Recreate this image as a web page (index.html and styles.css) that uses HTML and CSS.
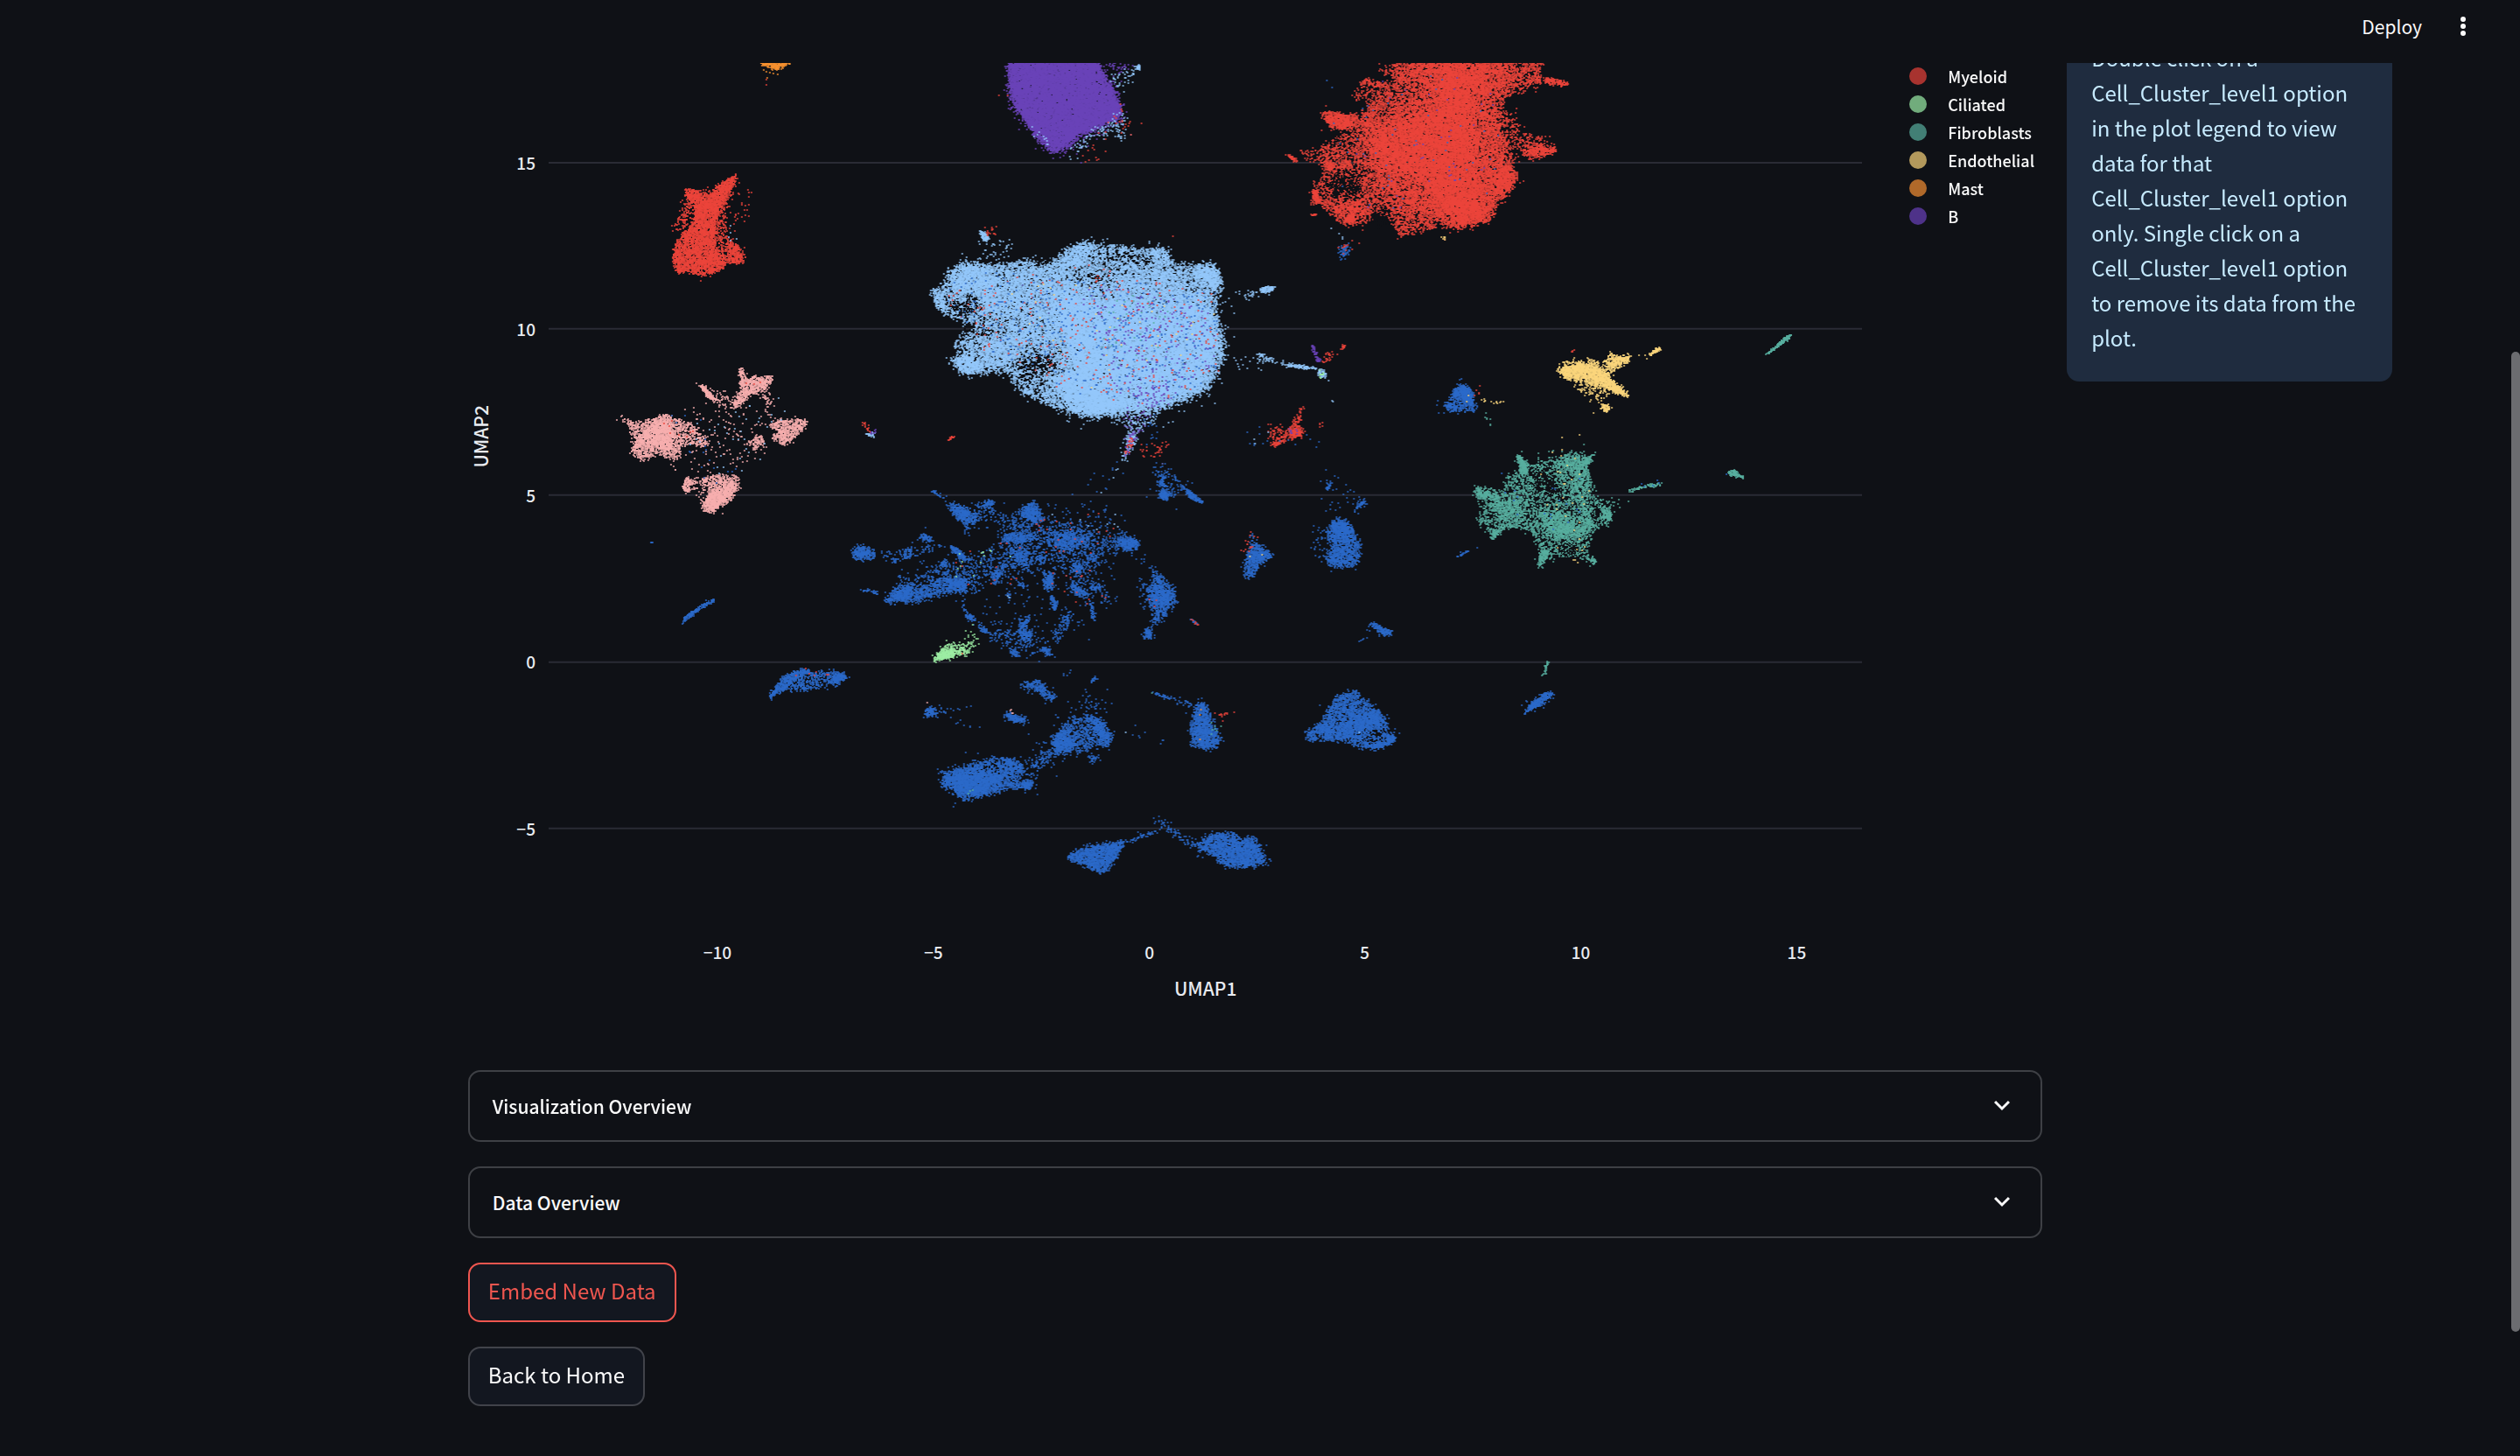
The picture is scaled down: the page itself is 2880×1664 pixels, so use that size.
FILE: index.html
```html
<!DOCTYPE html>
<html lang="en">
<head>
<meta charset="utf-8">
<title>UMAP Visualization</title>
<meta name="viewport" content="width=device-width, initial-scale=1">
<link rel="stylesheet" href="styles.css">
</head>
<body>
<header class="topbar">
  <button class="deploy" type="button">Deploy</button>
  <button class="menu" type="button" aria-label="Main menu">
    <svg viewBox="0 0 28 28" aria-hidden="true"><circle cx="14" cy="6" r="3"/><circle cx="14" cy="14" r="3"/><circle cx="14" cy="22" r="3"/></svg>
  </button>
</header>

<main class="columns">
  <section class="center">
    <figure class="plot">
      <div class="chart">
        <svg class="axes" viewBox="535 20 1594 1175" role="img" aria-label="UMAP scatter plot">
          <g class="grid">
            <path d="M627 186H2129M627 376H2129M627 566H2129M627 757H2129M627 947H2129"/>
          </g>
          <g class="ticks ticks-y">
            <text x="612" y="194">15</text>
            <text x="612" y="384">10</text>
            <text x="612" y="574">5</text>
            <text x="612" y="764">0</text>
            <text x="612" y="955">−5</text>
          </g>
          <g class="ticks ticks-x">
            <text x="820" y="1096">−10</text>
            <text x="1067" y="1096">−5</text>
            <text x="1314" y="1096">0</text>
            <text x="1560" y="1096">5</text>
            <text x="1807" y="1096">10</text>
            <text x="2054" y="1096">15</text>
          </g>
          <text class="axis-title" x="1378" y="1138">UMAP1</text>
          <text class="axis-title" transform="translate(558 499) rotate(-90)">UMAP2</text>
        </svg>
        <canvas class="points" id="points" width="1594" height="1175"></canvas>
      </div>
      <ul class="legend">
        <li><span class="dot myeloid"></span>Myeloid</li>
        <li><span class="dot ciliated"></span>Ciliated</li>
        <li><span class="dot fibroblasts"></span>Fibroblasts</li>
        <li><span class="dot endothelial"></span>Endothelial</li>
        <li><span class="dot mast"></span>Mast</li>
        <li><span class="dot b-cell"></span>B</li>
      </ul>
    </figure>

    <details class="expander">
      <summary>Visualization Overview
        <svg viewBox="0 0 24 24" aria-hidden="true"><path d="M6.700 8.700L12 14l5.300-5.300"/></svg>
      </summary>
    </details>
    <details class="expander">
      <summary>Data Overview
        <svg viewBox="0 0 24 24" aria-hidden="true"><path d="M6.700 8.700L12 14l5.300-5.300"/></svg>
      </summary>
    </details>
    <button class="btn btn-active" type="button">Embed New Data</button>
    <button class="btn" type="button">Back to Home</button>
  </section>

  <aside class="callout">
    <p>Double click on a Cell_Cluster_level1 option in the plot legend to view data for that Cell_Cluster_level1 option only. Single click on a Cell_Cluster_level1 option to remove its data from the plot.</p>
  </aside>
</main>
<div class="scroll-thumb"></div>
<script src="plot.js"></script>
</body>
</html>
```

FILE: styles.css
```css
* { box-sizing: border-box; }

body {
  margin: 0;
  min-height: 100vh;
  background: #0f1116;
  color: #fafafa;
  font-family: "Noto Sans CJK SC", "Noto Sans", sans-serif;
  font-size: 24px;
  overflow: hidden;
}

button { font: inherit; color: inherit; cursor: pointer; }

.topbar {
  position: fixed;
  inset: 0 0 auto;
  z-index: 2;
  height: 72px;
  padding: 0 51px 12px;
  display: flex;
  align-items: center;
  justify-content: flex-end;
  gap: 33px;
  background: #0f1116;
}
.deploy, .menu { padding: 0; border: 0; background: none; }
.deploy { font-size: 21px; line-height: 32px; }
.menu { width: 28px; height: 28px; }
.menu svg { display: block; width: 28px; height: 28px; fill: #fafafa; }

.columns {
  display: grid;
  grid-template-columns: 361fr 1800fr 372fr;
  column-gap: 28px;
  align-items: start;
  padding: 20px 146px 56px;
}
.center {
  grid-column: 2;
  display: flex;
  flex-direction: column;
  align-items: flex-start;
  gap: 28px;
}

.plot {
  width: 100%;
  margin: 0;
  display: grid;
  grid-template-columns: 1594fr 206fr;
}
.chart { display: grid; }
.axes, .points { grid-area: 1 / 1; display: block; width: 100%; }
.grid path { stroke: #2a2b35; stroke-width: 2; }
.axes text { fill: #e8ebf0; font-weight: 500; }
.ticks { font-size: 19px; }
.ticks-y { text-anchor: end; }
.ticks-x { text-anchor: middle; }
.axis-title { font-size: 21px; text-anchor: middle; }

.legend {
  list-style: none;
  margin: 0;
  padding: 51px 0 0 54px;
  font-size: 18px;
  font-weight: 500;
}
.legend li { display: flex; align-items: center; gap: 24px; height: 32px; white-space: nowrap; }
.dot { flex: none; width: 20px; height: 20px; border-radius: 50%; }
.myeloid { background: #a8332f; }
.ciliated { background: #71ac7c; }
.fibroblasts { background: #427f75; }
.endothelial { background: #b3995c; }
.mast { background: #b0692a; }
.b-cell { background: #4e3289; }

.expander {
  width: 100%;
  border: 2px solid #3e4045;
  border-radius: 14px;
}
.expander summary {
  display: flex;
  align-items: center;
  justify-content: space-between;
  height: 78px;
  padding: 0 26px;
  font-size: 21px;
  font-weight: 500;
  list-style: none;
  cursor: pointer;
}
.expander svg { width: 36px; height: 36px; fill: none; stroke: #fafafa; stroke-width: 2; }

.btn {
  height: 68px;
  padding: 0 21px 4px;
  border: 2px solid #41434a;
  border-radius: 14px;
  background: #131720;
  line-height: 40px;
}
.btn-active { border-color: #ef564f; color: #ef564f; }

.callout {
  padding: 26px 28px 30px;
  border-radius: 14px;
  background: #1f2c3f;
  color: #c7ebff;
  line-height: 40px;
}
.callout p { margin: 0; }

.scroll-thumb {
  position: fixed;
  top: 402px;
  right: 0;
  bottom: 142px;
  z-index: 3;
  width: 10px;
  border-radius: 5px;
  background: #6b6c70;
}
```

FILE: plot.js
```js
// Draws the cell clusters. Each panel is [originX, originY, unitsPerPxX, unitsPerPxY];
const COLORS = {
  red: '#ec443a', sky: '#93c8fb', blue: '#2b69c9', pink: '#f6aeae', teal: '#58af9f',
  gold: '#fbd67c', orange: '#f6912f', violet: '#6a42b9', green: '#9deea4', gap: '#0f1116'
};
const DENSITY = 1.6;
const SPREAD = 0.75;

const PANELS = [
  { at: [520, 50, 3, 2.8], clusters: [
    ['orange', .7, 1, '1040,30 1160,30 1150,60 1135,70 1115,79 1098,81 1075,75 1052,66'],
    ['orange', .04, 2, '1060,80 1120,80 1070,108'],
    ['red', .01, 1, '1065,110 1080,115 1076,210 1068,210'],
    ['red', .55, 1.5, '785,467 830,468 850,490 870,490 905,455 935,435 966,421 958,445 930,490 905,530 893,570 890,620 900,660 930,690 930,712 880,735 830,740 800,728 763,733 750,705 748,670 765,635 790,600 815,575 830,545 820,515 795,490'],
    ['red', .5, 2, '935,630 965,640 990,675 988,698 945,705 935,680'],
    ['red', .15, 3, '790,470 870,468 960,430 940,520 930,600 950,640 930,700 890,690 880,560 820,560 770,600 745,580 780,540'],
    ['red', .02, 3, '960,470 1020,465 1010,560 950,600'],
    ['sky', .01, 3, '900,560 990,600 975,660 930,620'],
    ['pink', .3, 2, '565,1193 600,1210 640,1210 680,1200 720,1187 760,1200 800,1215 835,1235 870,1280 850,1290 800,1280 775,1290 770,1320 740,1330 700,1310 640,1335 608,1310 615,1270 600,1230'],
    ['pink', .45, 2, '612,1305 630,1260 690,1210 730,1195 750,1240 740,1300 690,1290 640,1280'],
    ['pink', .8, 1, '838,1092 850,1093 880,1120 900,1142 885,1143 862,1125'],
    ['pink', .08, 3, '880,1110 950,1110 950,1170 900,1160'],
    ['pink', .5, 1.5, '973,1042 988,1045 1000,1075 1030,1065 1095,1068 1075,1090 1060,1110 1030,1115 1000,1130 965,1170 950,1155 980,1110'],
    ['pink', .12, 4, '1030,1100 1075,1100 1080,1130 1100,1190 1060,1150'],
    ['pink', .4, 2, '1075,1220 1120,1205 1195,1203 1215,1220 1180,1240 1160,1265 1125,1283 1085,1265 1110,1240'],
    ['pink', .35, 2, '1005,1275 1050,1255 1065,1270 1025,1300'],
    ['pink', .012, 5, '820,1160 1080,1170 1080,1290 960,1380 800,1400 740,1350'],
    ['pink', .5, 1, '775,1425 795,1390 822,1400 800,1440'],
    ['pink', .28, 2, '845,1395 900,1380 970,1385 975,1410 950,1460 910,1480 890,1500 860,1500 848,1465 880,1430'],
    ['pink', .5, 2, '890,1425 960,1400 945,1450 900,1480 880,1500 850,1475'],
    ['pink', .08, 3, '800,1390 880,1380 880,1450 810,1440'],
    ['red', .012, 3, '720,1210 800,1210 820,1250 740,1260'],
    ['red', .012, 3, '980,1080 1050,1080 1040,1120 1000,1120'],
    ['sky', .004, 5, '780,1200 870,1200 1100,1100 1150,1170 980,1370 880,1370'],
    ['blue', .003, 5, '740,1190 870,1200 1000,1370 840,1440'],
    ['red', .5, 1, '1400,1212 1408,1215 1422,1243 1415,1243'],
    ['sky', .5, 1, '1408,1245 1430,1243 1440,1250 1433,1260'],
    ['violet', .3, 1, '1425,1245 1452,1235 1440,1248']
  ]},
  { at: [1020, 50, 3, 2.8], clusters: [
    ['violet', .85, 2.5, '402,70 410,20 690,20 718,90 755,150 785,215 780,235 700,265 640,290 590,335 550,345 510,310 460,250 425,200 405,150'],
    ['violet', .1, 5, '400,60 420,20 700,20 790,200 790,240 600,350 540,350 410,200'],
    ['violet', .12, 2, '735,62 830,64 780,95'],
    ['sky', .6, 1, '830,70 852,68 852,84 835,84'],
    ['sky', .05, 3, '740,110 830,80 825,130 790,150'],
    ['sky', .08, 4, '740,250 800,220 800,300 700,300 600,370 640,310'],
    ['sky', .02, 3, '460,280 520,290 560,350 520,320'],
    ['red', .012, 6, '700,300 800,200 870,260 800,320 620,400'],
    ['red', .002, 5, '360,130 420,200 410,300 380,310'],
    ['sky', .3, 3.5, '135,800 170,780 200,720 240,700 330,705 400,710 440,690 500,700 560,690 600,655 660,635 720,650 800,650 860,660 910,650 950,675 970,705 1030,715 1070,703 1105,710 1135,750 1120,800 1105,850 1115,890 1135,940 1135,1000 1110,1070 1070,1110 1000,1140 900,1175 800,1175 700,1195 640,1190 560,1165 500,1140 440,1115 400,1050 340,1045 250,1060 205,1020 240,990 210,960 260,930 300,900 240,885 170,860'],
    ['gap', .25, 4, '190,820 280,820 280,860 240,870 200,850'],
    ['gap', .2, 5, '440,1010 560,1000 570,1030 500,1060 510,1100 450,1080'],
    ['gap', .08, 4, '690,665 880,665 900,710 880,720 690,690'],
    ['gap', .12, 4, '620,740 780,750 780,780 680,780'],
    ['gap', .08, 4, '350,850 480,880 480,920 340,930 250,930'],
    ['gap', .2, 4, '490,695 550,695 540,710 490,710'],
    ['sky', .2, 6, '560,780 700,760 900,720 1080,810 1120,960 1080,1100 900,1165 700,1190 560,1090 600,960'],
    ['sky', .35, 8, '560,800 700,820 900,830 1080,830 1120,960 1070,1090 900,1150 740,1180 660,1080 600,960'],
    ['sky', .35, 5, '210,730 300,710 350,750 350,870 320,850 290,790 210,780'],
    ['sky', .45, 3, '210,1010 260,990 290,1020 330,1040 250,1055'],
    ['sky', .2, 5, '300,950 450,940 400,1020 330,1040'],
    ['sky', .4, 4, '1040,715 1100,712 1128,750 1105,785 1060,760'],
    ['sky', .4, 4, '600,680 650,640 700,650 660,690 570,730'],
    ['sky', .35, 4, '880,660 925,660 955,700 925,700'],
    ['sky', .2, 8, '350,730 600,720 640,950 440,970 330,900'],
    ['sky', .4, 4, '540,1080 620,1050 760,1150 700,1188 620,1170'],
    ['sky', .3, 3, '138,800 165,800 185,850 170,850'],
    ['violet', .009, 3, '620,740 900,800 1090,860 1110,1000 1000,1120 900,1170 760,1100'],
    ['violet', .03, 4, '820,1100 980,1090 930,1150 850,1170'],
    ['red', .005, 3, '160,800 700,700 1110,800 1120,1050 900,1160 640,1120 340,1000'],
    ['blue', .008, 3, '160,800 300,720 1110,800 1120,1050 900,1160 640,1120 340,1000'],
    ['gold', .001, 3, '340,740 1110,800 1120,1050 640,1120'],
    ['teal', .003, 3, '700,800 950,800 950,1050 700,1000'],
    ['sky', .8, 1, '300,602 320,602 332,625 312,632'],
    ['red', .1, 1.5, '320,590 350,590 355,620 330,620'],
    ['sky', .03, 3, '290,640 410,620 400,690 300,690'],
    ['red', .001, 4, '940,570 1030,570 1040,630 940,640'],
    ['sky', .8, 1, '1262,785 1285,778 1312,780 1300,793 1272,797'],
    ['sky', .08, 2, '1170,800 1260,788 1265,800 1210,815'],
    ['sky', .13, 2, '1250,985 1300,1000 1320,1025 1270,1020'],
    ['sky', .012, 4, '1150,980 1240,980 1320,1040 1180,1060'],
    ['sky', .5, 1, '1320,1024 1380,1026 1440,1035 1460,1043 1380,1036'],
    ['sky', .5, 2, '1460,1042 1480,1045 1488,1060 1472,1070'],
    ['green', .1, 2, '1460,1050 1485,1050 1465,1085'],
    ['violet', .45, 1, '1438,965 1446,965 1470,1020 1457,1018'],
    ['sky', .03, 2, '1490,1060 1500,1060 1512,1160 1505,1160'],
    ['sky', .1, 4, '750,1195 920,1180 900,1210 850,1240 800,1330 785,1345 800,1270 810,1220'],
    ['violet', .025, 4, '800,1170 900,1170 850,1250 800,1320'],
    ['sky', .35, 1.5, '820,1235 838,1260 805,1310 788,1345 800,1290'],
    ['violet', .12, 2, '820,1240 835,1255 810,1320 795,1320'],
    ['red', .12, 2, '820,1260 835,1275 800,1320 795,1310'],
    ['red', .035, 4, '840,1270 960,1270 920,1330 840,1310'],
    ['blue', .02, 5, '870,1190 910,1200 910,1260 870,1290'],
    ['sky', .02, 4, '800,1330 720,1430 700,1440 760,1360'],
    ['blue', .008, 6, '640,1400 800,1330 780,1400 720,1440'],
    ['red', .9, .5, '188,1268 216,1253 218,1256 192,1270'],
    ['red', .2, 2, '1300,1285 1330,1260 1360,1235 1395,1180 1412,1155 1400,1200 1410,1255 1350,1270 1315,1290'],
    ['red', .5, 1.5, '1355,1235 1390,1228 1410,1255 1370,1258'],
    ['red', .8, 1, '1305,1280 1345,1268 1318,1288'],
    ['red', .1, 3, '1290,1225 1360,1230 1360,1265 1300,1280'],
    ['red', .06, 2, '1440,1210 1475,1210 1475,1225 1445,1225'],
    ['violet', .03, 2, '1340,1225 1400,1230 1390,1260'],
    ['blue', .005, 3, '1190,1230 1480,1230 1480,1300 1200,1290'],
    ['sky', .005, 3, '1210,1220 1300,1240 1280,1300 1220,1290'],
    ['blue', .3, 2, '920,1380 935,1380 942,1430 955,1440 935,1450 920,1450'],
    ['blue', .7, 1.5, '920,1438 950,1435 945,1460 918,1458'],
    ['blue', .8, 1, '990,1413 1010,1425 1070,1466 1066,1471 1020,1450'],
    ['blue', .06, 4, '900,1330 930,1350 1000,1400 1010,1440 900,1440']
  ]},
  { at: [1420, 50, 2.45, 2.24], clusters: [
    ['red', .22, 2.5, '430,20 850,20 835,75 830,105 780,120 735,140 725,180 735,230 750,270 770,330 765,360 745,385 715,410 710,440 690,455 640,455 610,475 560,462 510,478 440,492 420,450 380,430 345,465 280,460 250,435 225,420 195,400 200,370 240,320 230,300 220,270 260,240 300,230 340,215 340,180 370,140 440,110 420,70'],
    ['gap', .35, 5, '250,340 320,330 330,385 260,395 225,370'],
    ['gap', .2, 4, '370,415 420,425 410,460 370,460'],
    ['gap', .15, 4, '250,240 300,235 300,270 250,260'],
    ['red', .2, 6, '470,20 740,20 740,100 690,160 720,200 720,260 735,300 750,345 715,380 690,440 610,465 560,450 440,420 400,360 360,320 350,240 400,190 500,130 480,70'],
    ['red', .3, 8, '540,60 680,60 640,180 660,300 660,420 580,430 500,350 380,300 370,230 460,200 560,170'],
    ['red', .4, 3, '740,310 768,340 750,375 720,390 710,350'],
    ['red', .4, 4, '560,400 640,400 705,430 690,450 610,470'],
    ['red', .6, 2, '225,173 270,178 320,190 320,205 270,220 245,212'],
    ['red', .2, 3, '300,180 370,180 370,220 280,222'],
    ['red', .35, 2, '325,100 350,93 400,100 450,112 400,112 350,106'],
    ['red', .1, 3, '305,140 330,100 440,120 360,155'],
    ['red', .08, 4, '380,60 480,50 490,110 400,90'],
    ['red', .9, 1, '122,285 135,286 158,299 150,301'],
    ['red', .1, 4, '160,278 240,265 260,320 200,303'],
    ['red', .6, 2, '225,306 260,309 250,322'],
    ['red', .6, 1.5, '845,90 870,88 915,102 905,109 860,104'],
    ['red', .2, 2, '820,75 860,95 820,105'],
    ['red', .5, 2, '785,268 830,262 878,266 880,278 830,293 795,288'],
    ['red', .12, 4, '725,170 770,190 780,230 850,235 860,262 770,280 730,270'],
    ['red', .9, .5, '190,441 212,432 207,439'],
    ['red', .6, 2, '275,450 320,445 300,462'],
    ['red', .3, 3, '250,430 330,400 350,430 300,450'],
    ['red', .5, 2, '194,380 208,375 222,405 200,412'],
    ['blue', .001, 3, '200,80 700,80 740,380 300,440'],
    ['violet', .001, 3, '370,80 700,80 740,380 300,440'],
    ['blue', .4, 2, '274,530 285,512 302,522 282,552'],
    ['red', .06, 3, '270,525 295,505 325,510 300,535'],
    ['sky', .008, 4, '215,465 300,480 290,510 230,490'],
    ['gold', .3, 1, '556,490 564,491 567,502'],
    ['red', .2, 2, '225,815 240,790 258,787 255,800 235,818'],
    ['red', .5, 1, '275,781 288,768 290,775 278,784'],
    ['blue', .35, 2, '565,940 585,905 605,875 625,872 640,885 660,925 650,938 620,940'],
    ['blue', .6, 2, '595,895 620,875 638,885 650,920 600,905'],
    ['blue', .04, 3, '535,935 580,900 590,930 550,945'],
    ['gold', .12, 1.5, '670,912 735,915 735,920 675,918'],
    ['gold', .01, 2, '600,900 650,900 640,940'],
    ['red', .05, 2, '660,865 672,865 665,900 655,900'],
    ['teal', .2, 1.5, '665,940 680,950 705,985 695,975'],
    ['gold', .35, 2, '876,838 900,820 925,808 960,812 985,810 1010,825 1035,788 1050,798 1085,798 1082,815 1040,835 1030,850 1055,880 1088,902 1075,905 1030,885 990,880 960,870 910,860 900,845'],
    ['gold', .5, 2, '895,830 950,820 1000,835 1030,860 1085,902 1040,890 990,858 900,850'],
    ['gold', .5, 2, '1030,812 1085,799 1080,812 1035,825'],
    ['gold', .6, 1.5, '1003,938 1015,922 1035,930 1025,941'],
    ['gold', .1, 4, '930,865 1030,885 1015,915 960,900'],
    ['gold', .8, 1, '1142,794 1160,780 1177,775 1170,784 1148,796'],
    ['gold', .06, 2, '1090,806 1140,795 1140,800'],
    ['red', .6, 1, '920,780 928,783 926,788'],
    ['teal', .9, .5, '1465,798 1520,753 1542,741 1532,755 1480,791'],
    ['teal', .7, 1, '1360,1097 1380,1091 1407,1112 1390,1109 1370,1104'],
    ['blue', .04, 2, '1335,1103 1370,1095 1370,1107'],
    ['teal', .6, 1, '1080,1145 1130,1131 1178,1122 1172,1130 1120,1137 1085,1147'],
    ['blue', .04, 2, '1100,1130 1175,1117 1175,1130'],
    ['teal', .04, 3, '1010,1170 1050,1150 1070,1180 1040,1200'],
    ['teal', .16, 2.5, '770,1052 800,1075 830,1065 870,1070 925,1045 985,1052 965,1075 980,1120 990,1160 1010,1175 1035,1200 1038,1222 1010,1232 990,1240 975,1270 960,1290 975,1315 995,1335 975,1330 940,1310 880,1310 850,1320 835,1342 828,1335 835,1310 820,1260 790,1240 740,1240 715,1255 702,1272 700,1255 665,1238 658,1210 680,1190 652,1160 655,1135 690,1135 735,1145 740,1105 780,1095'],
    ['gap', .3, 5, '820,1095 860,1095 900,1140 880,1160 820,1140'],
    ['gap', .3, 3, '990,1180 1005,1200 1000,1230 985,1230'],
    ['gap', .2, 4, '870,1280 950,1285 950,1305 880,1300'],
    ['teal', .35, 4, '825,1200 900,1205 930,1230 940,1260 880,1265 850,1240'],
    ['teal', .5, 2, '775,1058 800,1080 795,1105 780,1100'],
    ['teal', .3, 3, '870,1070 940,1055 970,1065 950,1090 890,1085'],
    ['teal', .5, 2, '655,1137 690,1145 695,1163 665,1162'],
    ['teal', .25, 4, '690,1150 780,1170 780,1220 720,1210'],
    ['teal', .5, 2, '1012,1180 1035,1205 1032,1222 1010,1215'],
    ['teal', .3, 3, '950,1180 978,1190 972,1260 945,1250'],
    ['teal', .2, 3, '925,1085 965,1085 970,1180 940,1170'],
    ['teal', .6, 1.5, '829,1342 838,1295 858,1300 848,1320'],
    ['teal', .6, 1.5, '965,1318 985,1315 996,1335'],
    ['teal', .6, 1.5, '945,1085 965,1062 986,1051 970,1078'],
    ['teal', .6, 1.5, '768,1050 785,1060 795,1080 785,1085'],
    ['teal', .5, 1.5, '700,1272 705,1250 740,1225 735,1240'],
    ['teal', .02, 4, '840,1030 890,1035 880,1070 840,1065'],
    ['gold', .003, 5, '830,1000 960,1000 960,1320 880,1320'],
    ['blue', .002, 5, '700,1100 960,1100 960,1250 800,1250'],
    ['blue', .6, 1, '602,1313 635,1296 632,1301 605,1315'],
    ['blue', .015, 2, '540,1340 650,1280 660,1290'],
    ['blue', .4, 2, '245,1235 265,1215 290,1220 315,1250 330,1280 325,1330 300,1340 245,1340 235,1320 250,1290 238,1260'],
    ['blue', .4, 2, '250,1230 290,1225 305,1265 260,1265'],
    ['blue', .035, 4, '190,1250 240,1240 240,1320 190,1310'],
    ['blue', .6, 1.5, '318,1188 338,1168 347,1172 328,1190'],
    ['blue', .1, 2, '312,1190 325,1190 318,1205'],
    ['blue', .6, 1, '236,1138 245,1122 250,1126 243,1143'],
    ['blue', .01, 4, '220,1120 280,1100 350,1160 330,1200 240,1200'],
    ['blue', .7, 1.5, '358,1487 372,1484 400,1498 420,1504 418,1513 388,1512 378,1500'],
    ['blue', .3, 1, '330,1526 348,1522 345,1528'],
    ['blue', .03, 2, '340,1480 360,1480 360,1500 345,1500']
  ]},
  { at: [1440, 440, 2.376, 2.8], clusters: [
    ['blue', .36, 2, '205,1000 258,973 290,1010 320,1040 340,1070 350,1110 372,1130 355,1150 310,1168 270,1155 230,1140 180,1135 130,1140 128,1115 160,1085 180,1050'],
    ['gap', .2, 3, '300,1108 340,1108 335,1140 300,1140'],
    ['blue', .35, 4, '230,1080 320,1040 340,1075 290,1100 240,1120'],
    ['blue', .5, 2, '350,1115 372,1130 350,1150 310,1168 290,1158 345,1140'],
    ['blue', .25, 3, '155,1090 200,1085 240,1130 200,1130'],
    ['sky', .02, 2, '245,1105 275,1105 265,1120'],
    ['blue', .7, 1.5, '716,1057 745,1010 775,985 797,985 770,1020 745,1037'],
    ['blue', .06, 3, '718,1030 745,1000 740,1030'],
    ['teal', .5, .5, '775,905 782,885 785,888 777,925'],
    ['teal', .03, 1, '765,925 775,925 764,960']
  ]},
  { at: [900, 500, 2.613, 2.8], clusters: [
    ['blue', .8, 1, '426,164 445,176 462,190 450,188'],
    ['blue', .2, 2, '455,185 485,205 500,220 480,205'],
    ['blue', .7, 2.5, '485,213 520,220 570,255 564,270 540,275 500,247'],
    ['blue', .5, 2, '580,224 595,200 618,198 612,222'],
    ['blue', .1, 4, '560,215 620,215 610,280 560,270'],
    ['blue', .2, 2, '528,275 540,275 538,320 530,315'],
    ['blue', .65, 3, '698,235 715,215 735,210 754,240 758,264 740,270 710,255'],
    ['blue', .05, 5, '620,250 700,240 780,270 700,300 620,290'],
    ['blue', .5, 2.5, '640,325 670,306 740,316 745,328 690,332 650,332'],
    ['blue', .35, 4, '790,320 820,305 845,318 870,325 905,315 910,335 870,340 845,370 830,360 800,340'],
    ['blue', .12, 6, '740,310 880,290 910,340 850,350 760,340'],
    ['blue', .7, 2.5, '986,326 1015,317 1050,332 1044,356 1000,358'],
    ['blue', .08, 5, '920,340 1000,310 1000,360 940,350'],
    ['blue', .07, 7, '640,270 860,270 980,330 940,400 900,480 840,490 840,440 760,400 720,440 600,440 560,490 480,400 560,380 640,350'],
    ['blue', .015, 9, '640,250 870,210 1000,240 1000,420 860,500 700,400'],
    ['blue', .65, 2.5, '195,367 225,348 264,368 247,387 206,388'],
    ['blue', .08, 3, '260,370 320,365 460,342 460,352 370,385 320,400'],
    ['blue', .45, 2.5, '342,370 370,360 375,380 355,385'],
    ['blue', .4, 1.5, '315,400 325,392 330,396 320,406'],
    ['blue', .7, 1.5, '395,311 415,314 439,325 430,331 405,326'],
    ['blue', .8, 1.5, '483,346 502,352 542,390 530,394 500,370'],
    ['blue', .4, 2.5, '446,404 475,390 487,405 460,414'],
    ['blue', .45, 3, '665,353 695,370 722,400 715,417 690,405 670,382'],
    ['blue', .25, 4, '690,340 725,360 720,390 690,370'],
    ['blue', .55, 3, '610,440 635,430 638,460 620,466'],
    ['blue', .3, 3, '620,430 650,395 660,400 635,440'],
    ['blue', .4, 3, '745,385 790,388 790,396 750,396'],
    ['blue', .25, 3, '880,385 930,375 930,390 890,400'],
    ['green', .1, 1.5, '565,368 600,365 615,355 615,362 585,373'],
    ['blue', .34, 3, '288,522 320,480 350,463 400,480 450,455 532,448 532,492 470,497 400,520 340,527'],
    ['blue', .5, 2.5, '288,526 330,490 375,475 350,517'],
    ['blue', .35, 3, '480,460 530,455 530,488 490,480'],
    ['blue', .09, 5, '300,470 480,400 540,430 580,490 540,490 400,470'],
    ['blue', .4, 1, '220,490 245,487 280,498 275,503 235,494'],
    ['blue', .7, 2, '770,438 790,434 795,482 770,485'],
    ['blue', .45, 2, '685,460 700,465 720,478 700,480'],
    ['blue', .5, 1.5, '655,500 668,500 665,512'],
    ['sky', .12, 1.5, '655,502 668,502 664,512 657,512'],
    ['blue', .7, 1.5, '785,506 797,511 810,548 795,550'],
    ['blue', .5, 3, '843,403 870,400 888,425 868,434'],
    ['blue', .6, 2.5, '848,473 885,483 899,495 875,510 856,495'],
    ['blue', .5, 2, '900,478 940,470 942,484 905,487'],
    ['blue', .6, 1, '905,530 912,530 918,588 911,580'],
    ['blue', .12, 2, '895,500 908,500 912,530 905,530'],
    ['blue', .7, 1.5, '528,563 548,567 560,584 545,587'],
    ['blue', .3, 2, '555,583 570,590 600,620 590,628'],
    ['blue', .2, 2, '520,500 530,540 538,565 525,545'],
    ['blue', .5, 2.5, '695,588 722,570 714,605 734,635 715,654 695,640'],
    ['blue', .08, 5, '590,610 700,620 700,690 640,670'],
    ['blue', .7, 1.5, '666,680 680,680 696,704 680,700'],
    ['blue', .6, 2, '755,676 775,672 792,698 775,694'],
    ['blue', .07, 5, '700,640 780,660 740,705 700,690'],
    ['blue', .12, 3, '790,615 840,565 845,580 805,660'],
    ['blue', .3, 2, '832,570 845,562 840,600 832,605'],
    ['blue', .008, 6, '540,490 920,490 900,640 600,640'],
    ['blue', .04, 3, '930,490 990,500 980,540 930,530'],
    ['sky', .003, 5, '780,250 1000,240 980,300 800,280'],
    ['red', .002, 5, '500,350 720,250 980,240 980,540 840,520 500,460'],
    ['green', .001, 5, '480,350 700,350 700,520 500,500'],
    ['blue', .4, 3, '1093,428 1125,453 1154,490 1160,530 1130,567 1105,592 1090,592 1100,550 1080,520 1080,480 1100,460'],
    ['blue', .4, 4, '1085,490 1145,485 1145,530 1105,530'],
    ['blue', .05, 5, '1050,480 1085,440 1090,560 1060,540'],
    ['blue', .7, 2, '1065,622 1080,606 1092,638 1070,644'],
    ['blue', .07, 3, '1060,385 1070,385 1110,440 1095,440'],
    ['red', .004, 5, '1060,480 1160,480 1100,600'],
    ['blue', .4, 1, '1207,583 1212,583 1230,600 1224,600'],
    ['red', .3, 1, '1203,575 1210,580 1232,600 1225,600'],
    ['blue', .45, 2, '1367,455 1370,385 1388,346 1410,346 1450,378 1420,400 1395,434 1376,454'],
    ['blue', .3, 2, '1385,360 1410,350 1440,378 1400,395'],
    ['blue', .15, 3, '1383,310 1395,310 1410,350 1380,350'],
    ['red', .05, 2, '1385,305 1395,300 1395,340 1368,380 1365,370'],
    ['gold', .005, 3, '1355,360 1420,360 1400,400'],
    ['green', .2, 2, '437,718 455,680 490,655 520,660 555,650 550,685 500,700'],
    ['green', .6, 1.5, '436,718 462,676 475,683 505,678 495,702 455,712'],
    ['green', .5, 1.5, '508,687 530,682 535,692 512,697'],
    ['green', .03, 4, '515,600 550,600 580,670 530,660'],
    ['red', .015, 3, '490,650 530,650 520,670'],
    ['blue', .45, 2, '700,793 745,778 765,790 800,830 788,847 770,825 745,810 715,805'],
    ['blue', .7, 1, '903,784 920,766 926,768 908,788'],
    ['blue', .03, 3, '740,725 850,760 830,775 770,745'],
    ['blue', .05, 5, '880,820 960,835 950,880 890,870'],
    ['blue', .6, 2, '413,870 438,865 450,882 435,892 414,892'],
    ['pink', .04, 2, '417,848 435,860 420,860'],
    ['blue', .2, 2, '440,870 500,868 565,854 520,866 470,880'],
    ['blue', .03, 4, '440,880 530,910 570,940 500,920'],
    ['blue', .7, 2, '646,885 662,883 690,894 714,898 700,911 670,909'],
    ['pink', .08, 1.5, '657,866 675,875 675,888'],
    ['blue', .07, 3, '700,900 730,900 710,930'],
    ['blue', .22, 3, '790,985 820,930 850,900 900,888 940,910 968,960 960,988 920,990 905,1000 850,1003 800,1010 770,1040 740,1055 730,1040 770,1010'],
    ['blue', .55, 4, '800,960 830,933 845,960 862,990 820,1005 796,990'],
    ['blue', .5, 3, '905,892 938,910 970,965 955,987 935,965'],
    ['blue', .45, 2, '895,1015 925,1022 915,1040'],
    ['blue', .07, 6, '700,1050 780,1000 790,1040 710,1110'],
    ['blue', .01, 8, '730,930 860,850 900,880 760,1000'],
    ['blue', .38, 3, '460,1075 520,1060 570,1040 640,1026 700,1043 708,1075 680,1095 740,1105 715,1128 680,1118 620,1134 545,1158 520,1152 463,1110'],
    ['gap', .15, 4, '575,1048 620,1040 650,1068 600,1062'],
    ['blue', .45, 5, '468,1078 560,1068 640,1090 600,1125 530,1145 475,1108'],
    ['blue', .3, 4, '630,1030 680,1035 705,1060 680,1070'],
    ['blue', .45, 3, '680,1108 735,1106 715,1125'],
    ['teal', .02, 3, '525,1130 565,1130 550,1150'],
    ['blue', .5, 1.5, '1090,818 1105,816 1150,834 1145,838'],
    ['blue', .22, 2.5, '1150,832 1230,855 1220,866 1150,840'],
    ['blue', .6, 3, '1225,860 1245,848 1262,890 1268,930 1290,960 1284,986 1250,992 1216,985 1206,940 1215,890'],
    ['teal', .05, 3, '1262,920 1290,920 1285,950 1268,950'],
    ['teal', .08, 2, '1088,817 1102,817 1098,828'],
    ['orange', .004, 3, '1220,870 1260,870 1250,960 1220,960'],
    ['red', .2, 1.5, '1278,886 1300,882 1325,875 1310,890 1303,905 1298,890'],
    ['blue', .006, 4, '980,920 1200,950 1200,970 980,970'],
    ['sky', .01, 4, '975,915 1025,925 1010,945 980,940'],
    ['blue', .6, 2, '836,1340 870,1321 920,1307 985,1298 1007,1296 987,1335 952,1387 930,1392 890,1367 850,1352'],
    ['blue', .08, 4, '870,1315 930,1295 990,1295 920,1310'],
    ['blue', .4, 1.5, '985,1300 1050,1278 1100,1258 1105,1262 1040,1288 1000,1300'],
    ['blue', .12, 3, '1098,1210 1130,1230 1110,1260'],
    ['blue', .25, 3, '1118,1240 1180,1285 1250,1330 1240,1300 1180,1275 1140,1245'],
    ['blue', .55, 3, '1243,1280 1290,1267 1345,1271 1350,1289 1390,1283 1414,1310 1431,1360 1370,1374 1310,1370 1273,1335 1236,1318']
  ]},
  { at: [520, 560, 3, 3], clusters: [
    ['blue', .7, 1.5, '1074,716 1095,680 1130,640 1165,625 1200,612 1217,619 1190,640 1160,650 1140,680 1100,700'],
    ['blue', .23, 2, '1140,660 1220,622 1310,623 1352,642 1300,665 1230,683 1150,689'],
    ['blue', .5, 2, '1285,640 1310,627 1350,642 1305,668'],
    ['red', .012, 2, '1150,640 1220,612 1320,625 1320,645'],
    ['blue', .9, 1, '777,460 790,435 820,414 860,389 892,375 889,381 850,401 820,423 790,449'],
    ['blue', 1, .5, '671,180 677,178 677,184 672,184']
  ]}
];

// Small seeded generator, so the plot is the same on every load.
let seed = 20240517;
function random() {
  seed = (seed + 0x6D2B79F5) | 0;
  let t = Math.imul(seed ^ (seed >>> 15), 1 | seed);
  t = (t + Math.imul(t ^ (t >>> 7), 61 | t)) ^ t;
  return ((t ^ (t >>> 14)) >>> 0) / 4294967296;
}
function gauss() {
  return Math.sqrt(-2 * Math.log(1 - random())) * Math.cos(2 * Math.PI * random());
}
function inside(x, y, poly) {
  let hit = false;
  for (let i = 0, j = poly.length - 1; i < poly.length; j = i++) {
    const [xi, yi] = poly[i], [xj, yj] = poly[j];
    if (yi > y !== yj > y && x < (xj - xi) * (y - yi) / (yj - yi) + xi) hit = !hit;
  }
  return hit;
}

const ctx = document.getElementById('points').getContext('2d');
ctx.translate(-535, -20);
for (const { at: [ox, oy, ux, uy], clusters } of PANELS) {
  for (const [type, density, spread, outline] of clusters) {
    const poly = outline.split(' ').map(p => {
      const [x, y] = p.split(',').map(Number);
      return [ox + x / ux, oy + y / uy];
    });
    const xs = poly.map(p => p[0]), ys = poly.map(p => p[1]);
    const x0 = Math.min(...xs), x1 = Math.max(...xs);
    const y0 = Math.min(...ys), y1 = Math.max(...ys);
    const isGap = type === 'gap';
    const tries = Math.round((x1 - x0) * (y1 - y0) * density * (isGap ? 1 : DENSITY));
    ctx.fillStyle = COLORS[type];
    ctx.globalAlpha = isGap ? 1 : .72;
    for (let i = 0; i < tries; i++) {
      const x = x0 + random() * (x1 - x0), y = y0 + random() * (y1 - y0);
      if (!inside(x, y, poly)) continue;
      const s = SPREAD * (random() < .06 && !isGap ? spread * 2.5 : spread);
      ctx.fillRect(Math.round(x + gauss() * s - 1), Math.round(y + gauss() * s - 1), 2, 2);
    }
  }
}
```
